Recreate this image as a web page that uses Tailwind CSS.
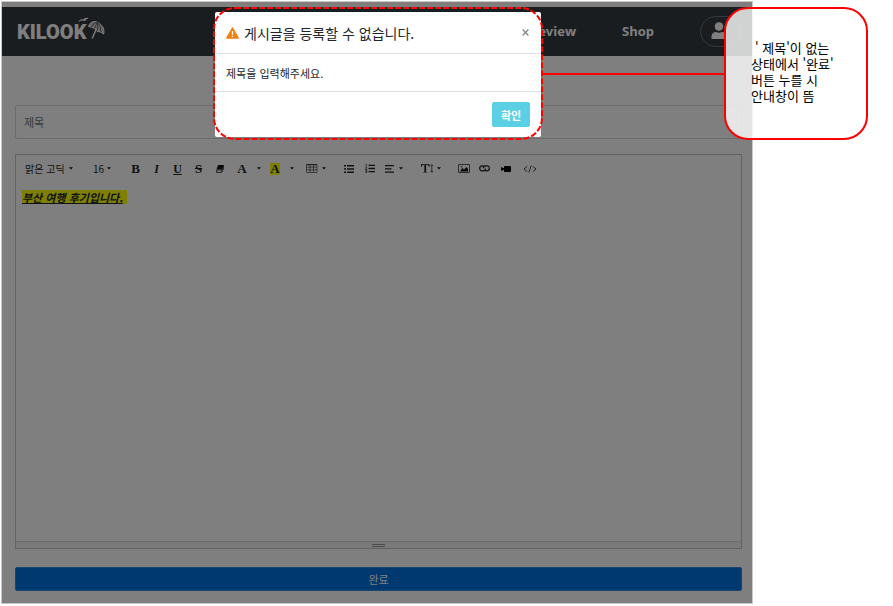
<!DOCTYPE html>
<html lang="ko">
<head>
<meta charset="utf-8">
<meta name="viewport" content="width=device-width, initial-scale=1">
<title>KILOOK</title>
<script src="https://cdn.jsdelivr.net/npm/@tailwindcss/browser@4"></script>
</head>
<body class="bg-white text-[#212529] font-['Noto_Sans_CJK_KR',sans-serif]">
<svg class="hidden">
  <symbol id="caret" viewBox="0 0 4 3"><path d="M0 .2h4L2 2.6z" fill="#111"/></symbol>
</svg>
<div class="min-h-screen flex flex-col pt-px pl-px pb-[2px] pr-[140px]">
  <div class="relative flex-1 flex flex-col border border-[#c8c8c8] bg-white">
    <header class="mt-[5px] h-[49px] bg-[#343a40] flex items-center pl-[15px] pr-[10px]">
      <a href="#" class="flex items-center text-white font-['Roboto',sans-serif] font-black text-[20px] leading-6">KILOOK
        <svg class="w-[27px] h-[24px] -ml-2 -mt-2" viewBox="0 0 27 24" fill="none" stroke="#fff" aria-hidden="true">
          <path d="M1 5.500q2-2.500 4-1.200q2-2.300 5-1.800M5 4.300q2 0 3-.8" stroke-width="1.100"/>
          <path d="M10.500 10.500C12 5.500 17 4 21.500 7.500c3.500 2.500 5 6 4.300 10.500l-3.300-2-3.500-.7-3-3-2.800-1.300z" fill="#fff" fill-opacity=".75" stroke-width="1"/>
          <path d="M13.500 11q1.500-4 5.500-4.800M16.500 12.500q1.800-3.500 2.700-6.200M19.300 15q1-4.500.2-8.500M22.800 16q.5-6-3-9.500" stroke="#343a40" stroke-width=".7"/>
          <path d="M18.300 13L14.200 22.500" stroke-width="1.400"/>
        </svg>
      </a>
      <nav class="ml-auto flex items-center gap-[46px] text-white font-['Open_Sans',sans-serif] font-bold text-[13px]">
        <a href="#">Review</a>
        <a href="#">Shop</a>
        <button aria-label="내 계정" class="w-[42px] h-[31px] rounded-full border border-[#6c7278] flex items-center justify-center pr-1 pb-[2px]">
          <svg class="w-4 h-[18px]" viewBox="0 0 16 18" fill="#fff"><circle cx="8" cy="4.500" r="4.300"/><path d="M.5 17v-2.500c0-3 2-4.500 4.500-4.500 2 1 4 1 6 0 2.500 0 4.500 1.500 4.500 4.500V17z"/></svg>
        </button>
      </nav>
    </header>

    <form class="flex-1 flex flex-col pt-[49px] pl-[13px] pr-[10px] pb-3">
      <input aria-label="제목" placeholder="제목" class="w-full h-[34px] rounded-[2px] border border-[#d4d8dc] bg-white px-2 text-[11px] placeholder:text-[#6c757d]">
      <div class="mt-[15px] flex-1 flex flex-col border border-[#c4c8c8]">
        <div class="flex items-center h-[27px] pl-[9px] text-[10px]">
          <label class="relative w-12 mr-5 flex items-center">
            <select aria-label="글꼴" class="appearance-none w-full leading-4 bg-transparent"><option>맑은 고딕</option></select>
            <svg class="absolute right-0 w-1 h-[3px]"><use href="#caret"/></svg>
          </label>
          <label class="relative w-[18px] mr-[14px] flex items-center">
            <select aria-label="글자 크기" class="appearance-none w-full leading-4 bg-transparent"><option>16</option></select>
            <svg class="absolute right-0 w-1 h-[3px]"><use href="#caret"/></svg>
          </label>
          <button type="button" aria-label="굵게" class="w-[21px] font-['Liberation_Serif',serif] font-bold text-[13px]">B</button>
          <button type="button" aria-label="기울임" class="w-[21px] font-['Liberation_Serif',serif] font-bold italic text-[12px]">I</button>
          <button type="button" aria-label="밑줄" class="w-[21px] font-['Liberation_Serif',serif] font-bold underline underline-offset-1 text-[12px]">U</button>
          <button type="button" aria-label="취소선" class="w-[21px] font-['Liberation_Serif',serif] font-bold line-through text-[13px]">S</button>
          <button type="button" aria-label="서식 지우기" class="w-[21px] flex justify-center mr-[2px]">
            <svg class="w-2 h-2" viewBox="0 0 8 8"><path d="M2 0h6L6.500 4.500h-6z" fill="#111"/><path d="M.6 4.800h5.600L5.500 7.500H.4zM6.400 4.500L8 .5v2.500L6 7.300" fill="#ddd" stroke="#222" stroke-width=".7"/></svg>
          </button>
          <button type="button" aria-label="글자색" class="w-5 font-['Liberation_Serif',serif] font-bold text-[13px]">A</button>
          <button type="button" aria-label="글자색 더보기" class="w-[14px] flex justify-center"><svg class="w-1 h-[3px]"><use href="#caret"/></svg></button>
          <button type="button" aria-label="배경색" class="w-[18px] flex justify-center font-['Liberation_Serif',serif] font-bold text-[13px]"><span class="w-[10px] h-3 leading-3 bg-[#ffff00]">A</span></button>
          <button type="button" aria-label="배경색 더보기" class="w-4 flex justify-center mr-[6px]"><svg class="w-1 h-[3px]"><use href="#caret"/></svg></button>
          <button type="button" aria-label="표" class="w-5 flex items-center justify-between mr-3">
            <svg class="w-3 h-[9px]" viewBox="0 0 12 9" fill="none" stroke="#555" stroke-width=".8"><path d="M.5.5h10.500v8H.5zM4 .5v8M7.500.5v8M.5 3.200h10.500M.5 5.800h10.500"/><path d="M.5.7h10.500" stroke="#222"/></svg>
            <svg class="w-1 h-[3px]"><use href="#caret"/></svg>
          </button>
          <button type="button" aria-label="글머리 기호" class="w-[21px] flex justify-center">
            <svg class="w-[10px] h-2" viewBox="0 0 10 8" fill="#222"><path d="M0 0h2v1.600H0zM0 3.200h2v1.600H0zM0 6.400h2V8H0zM3 0h7v1.500H3zM3 3.200h7v1.500H3zM3 6.400h7v1.500H3z"/></svg>
          </button>
          <button type="button" aria-label="번호 매기기" class="w-[21px] flex justify-center mr-[5px]">
            <svg class="w-[10px] h-[9px]" viewBox="0 0 10 9" fill="#222"><path d="M3.500.7H10v1.400H3.500zM3.500 3.800H10v1.400H3.500zM3.500 6.900H10v1.400H3.500z"/><path d="M.5.5h.9v2.300M.3 3.700h1.500L.5 5.500h1.700M.3 6.500h1.500v2H.3M.8 7.500h1" fill="none" stroke="#222" stroke-width=".7"/></svg>
          </button>
          <button type="button" aria-label="정렬" class="w-[18px] flex items-center justify-between mr-[18px]">
            <svg class="w-[10px] h-2" viewBox="0 0 10 8" fill="#222"><path d="M0 0h9v1.300H0zM0 3.200h6.500v1.300H0zM0 6.400h9v1.300H0z"/></svg>
            <svg class="w-1 h-[3px]"><use href="#caret"/></svg>
          </button>
          <button type="button" aria-label="줄 간격" class="w-5 flex items-center justify-between mr-3">
            <svg class="w-[13px] h-[9px]" viewBox="0 0 13 9"><path d="M0 .3h8.500v2.500h-.6Q7.700 1.100 6.200 1.100H5.100v6.300q0 .7 1.200.7v.5H2.200v-.5q1.200 0 1.200-.7V1.100H2.300Q.8 1.100.6 2.800H0z" fill="#1a1a1a"/><path d="M10.800 1v7M9.500 2L10.800.6 12.100 2M9.500 7l1.300 1.400L12.100 7" fill="none" stroke="#333" stroke-width=".8"/></svg>
            <svg class="w-1 h-[3px]"><use href="#caret"/></svg>
          </button>
          <button type="button" aria-label="그림" class="w-[21px] flex justify-center">
            <svg class="w-3 h-[9px]" viewBox="0 0 12 9"><path d="M.5.5h11v8H.5z" fill="none" stroke="#444" stroke-width=".9"/><path d="M2 7.500L4.200 4 6 5.500 8.500 3 10 5v2.500z" fill="#111"/><circle cx="3.500" cy="2.700" r=".8" fill="#333"/></svg>
          </button>
          <button type="button" aria-label="링크" class="w-[21px] flex justify-center">
            <svg class="w-[11px] h-[7px]" viewBox="0 0 11 7" fill="none" stroke="#222" stroke-width="1.200"><path d="M5 1.800Q4.500.8 3.200.8 0.700.8.700 3.300T3.200 5.900H4.500Q6.500 5.700 6.500 3.500"/><path d="M6 5.200Q6.500 5.900 7.800 5.900 10.300 5.900 10.300 3.300T7.800.8H6.500Q4.500 1 4.500 3.200"/></svg>
          </button>
          <button type="button" aria-label="동영상" class="w-[21px] flex justify-center mr-1">
            <svg class="w-[10px] h-[6px]" viewBox="0 0 10 6" fill="#000"><rect x="3" width="7" height="6" rx=".8"/><path d="M0 1l3.500 1.500v1L0 5z"/></svg>
          </button>
          <button type="button" aria-label="코드 보기" class="w-5 flex justify-center">
            <svg class="w-[14px] h-2" viewBox="0 0 14 8" fill="none" stroke="#333" stroke-width=".9"><path d="M4.200 1.300L1 4l3.200 2.700M9.800 1.300L13 4 9.800 6.700M8.200.5L5.800 7.500"/></svg>
          </button>
        </div>
        <div contenteditable="true" role="textbox" aria-label="본문" class="flex-1 px-[6px] pt-2 text-[11px] leading-[14px]"><b><i><u class="inline-block pr-1 bg-[#ffff00]">부산 여행 후기입니다.</u></i></b></div>
        <div class="h-[7px] border-t border-[#dadada] bg-[#f5f5f5] flex flex-col items-center justify-center gap-px">
          <span class="w-[13px] h-px bg-[#999]"></span><span class="w-[13px] h-px bg-[#999]"></span>
        </div>
      </div>
      <button type="button" class="mt-[18px] h-6 rounded-[2px] border border-[#3088e0] bg-[#0070e0] text-white text-[11px] leading-none">완료</button>
    </form>

    <div class="absolute inset-0 bg-black/50"></div>

    <div role="dialog" aria-labelledby="dialog-title" class="absolute top-[10px] left-1/2 ml-px -translate-x-1/2 w-[326px] rounded-[2px] bg-white">
      <div class="h-[42px] px-[11px] flex items-center border-b border-[#dee2e6]">
        <svg class="w-[13px] h-3 shrink-0 mr-[5px]" viewBox="0 0 13 12" aria-hidden="true"><path d="M6.500 1L12.200 11H.8z" fill="#f0810f" stroke="#f0810f" stroke-width="1.500" stroke-linejoin="round"/><path d="M6.500 4v3.700M6.500 8.700v1.300" stroke="#fff" stroke-width="1.300"/></svg>
        <h2 id="dialog-title" class="text-[14px] leading-5">게시글을 등록할 수 없습니다.</h2>
        <button aria-label="닫기" class="ml-auto p-px"><svg class="w-[7px] h-[7px]" viewBox="0 0 7 7"><path d="M.6.6l5.800 5.800M6.400.6L.6 6.400" stroke="#888" stroke-width="1.400"/></svg></button>
      </div>
      <p class="h-[38px] px-[11px] flex items-center border-b border-[#dee2e6] text-[11px] leading-4">제목을 입력해주세요.</p>
      <div class="h-[45px] px-[11px] flex items-center justify-end">
        <button class="w-[38px] h-[25px] rounded-[2px] bg-[#5bd0e4] text-white font-bold text-[11px] leading-4">확인</button>
      </div>
      <svg class="absolute -inset-x-px -top-1 w-[328px] h-[131px] overflow-visible pointer-events-none" aria-hidden="true"><rect width="100%" height="100%" rx="21" fill="none" stroke="#f00" stroke-width="2" stroke-dasharray="6 2"/></svg>
    </div>

    <div class="absolute top-[71px] left-1/2 ml-[166px] right-[26px] h-[2px] bg-[#ff0000]"></div>
    <aside class="absolute top-[5px] -right-[116px] w-[144px] h-[133px] rounded-[24px] border-2 border-[#ff0000] bg-white/80 pl-[25px] pb-1 flex items-center text-black text-[13px] leading-4">
      <p><span class="pl-1">' 제목'이 없는</span><br>상태에서 '완료'<br>버튼 누를 시<br>안내창이 뜸</p>
    </aside>
  </div>
</div>
</body>
</html>
